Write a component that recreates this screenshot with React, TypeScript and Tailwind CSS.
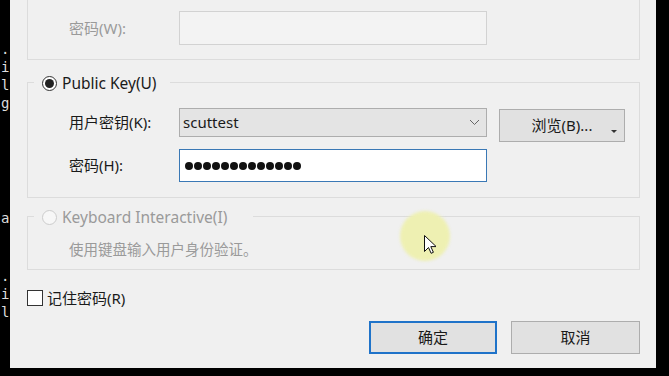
import React from 'react';

function Radio({ checked, disabled }: { checked?: boolean; disabled?: boolean }) {
  return (
    <span
      className={`flex h-[15px] w-[15px] items-center justify-center rounded-full border ${
        disabled ? 'border-[#cccccc] bg-[#f7f7f7]' : 'border-[#333333] bg-white'
      }`}>
      {checked && <span className="h-[9px] w-[9px] rounded-full bg-[#222222]" />}
    </span>
  );
}

function TerminalLines({ lines }: { lines: string[] }) {
  return (
    <div className="flex flex-col">
      {lines.map((l, i) => (
        <div key={i} className="h-[18px] pl-[1px] leading-[18px]">
          {l}
        </div>
      ))}
    </div>
  );
}

export default function App() {
  const dots = Array.from({ length: 13 });
  return (
    <div className="flex h-[376px] w-[669px] flex-col overflow-hidden bg-black font-['Noto_Sans','Noto_Sans_CJK_SC',sans-serif] text-[15px] text-[#1a1a1a]">
      <div className="flex h-[368px]">
        {/* terminal peeking out on the left */}
        <div className="w-[10px] shrink-0 overflow-hidden font-['DejaVu_Sans_Mono',monospace] text-[14px] text-[#dddddd]">
          <div className="mt-[40px]">
            <TerminalLines lines={['.', 'i', 'l', 'g']} />
          </div>
          <div className="mt-[97px]">
            <TerminalLines lines={['a']} />
          </div>
          <div className="mt-[40px]">
            <TerminalLines lines={['.', 'i', 'l']} />
          </div>
        </div>

        {/* dialog */}
        <div className="relative w-[646px] shrink-0 bg-[#f0f0f0] pl-[17px] pr-[16px]">
          {/* previous group (cut off) */}
          <div className="flex h-[60px] border-x border-b border-[#dcdcdc] pt-[11px]">
            <span className="ml-[41px] w-[110px] pt-[6px] text-[#9a9a9a]">密码(W):</span>
            <div className="h-[34px] w-[308px] border border-[#d2d2d2] bg-[#f3f3f3]" />
          </div>

          {/* Public Key group */}
          <div className="mt-[22px] h-[116px] border border-[#dcdcdc]">
            <div className="-mt-[10px] ml-[6px] flex h-[20px] w-fit items-center gap-[5px] bg-[#f0f0f0] pl-[8px] pr-[13px]">
              <Radio checked />
              <span className="text-[15.5px] leading-[20px]">Public Key(U)</span>
            </div>
            <div className="mt-[15px] flex items-start">
              <span className="ml-[41px] w-[110px] pt-[3px]">用户密钥(K):</span>
              <div className="flex h-[29px] w-[308px] items-center justify-between border border-[#adadad] bg-[#e4e4e4] pl-[3px] pr-[6px]">
                <span>scuttest</span>
                <svg width="11" height="7" viewBox="0 0 11 7" fill="none">
                  <path d="M1 1l4.5 4.5L10 1" stroke="#666666" strokeWidth="1" />
                </svg>
              </div>
              <button className="relative mt-[1px] ml-[12px] flex h-[33px] w-[126px] items-center justify-center border border-[#adadad] bg-[#e1e1e1]">
                浏览(B)...
                <span className="absolute right-[7px] bottom-[8px] h-0 w-0 border-x-[3px] border-t-[3px] border-x-transparent border-t-[#333333]" />
              </button>
            </div>
            <div className="mt-[7px] flex items-center">
              <span className="ml-[41px] w-[110px]">密码(H):</span>
              <div className="flex h-[33px] w-[308px] items-center gap-[1px] border border-[#3a78b5] bg-white pl-[5px]">
                {dots.map((_, i) => (
                  <span key={i} className="h-[8px] w-[8px] rounded-full bg-[#111111]" />
                ))}
              </div>
            </div>
          </div>

          {/* Keyboard Interactive group */}
          <div className="mt-[18px] h-[54px] border border-[#dcdcdc]">
            <div className="-mt-[10px] ml-[6px] flex h-[20px] w-fit items-center gap-[5px] bg-[#f0f0f0] pl-[8px] pr-[26px] text-[#9a9a9a]">
              <Radio disabled />
              <span className="text-[15.5px] leading-[20px]">Keyboard Interactive(I)</span>
            </div>
            <div className="mt-[13px] ml-[41px] text-[14.5px] leading-[18px] text-[#9a9a9a]">
              使用键盘输入用户身份验证。
            </div>
          </div>

          {/* remember password */}
          <div className="mt-[17px] flex items-center gap-[4px]">
            <span className="h-[16px] w-[16px] border border-[#333333] bg-white" />
            <span>记住密码(R)</span>
          </div>

          {/* buttons */}
          <div className="mt-[11px] flex justify-end gap-[14px]">
            <button className="flex h-[33px] w-[128px] items-center justify-center border-2 border-[#1f73c9] bg-[#e1e1e1]">
              确定
            </button>
            <button className="flex h-[33px] w-[129px] items-center justify-center border border-[#adadad] bg-[#e1e1e1]">
              取消
            </button>
          </div>

          {/* cursor highlight overlay */}
          <div className="pointer-events-none absolute left-[390px] top-[211px] h-[50px] w-[50px] rounded-full bg-[#eef0b2] blur-[1.5px]" />
          <svg
            className="pointer-events-none absolute left-[414px] top-[235px]"
            width="12"
            height="19"
            viewBox="0 0 12 19">
            <path
              d="M0.5 0.5v16l4-4 2.6 5.8 2.3-1-2.6-5.7h5.4z"
              fill="#ffffff"
              stroke="#111111"
              strokeWidth="1"
              strokeLinejoin="round"
            />
          </svg>
        </div>
      </div>
    </div>
  );
}
